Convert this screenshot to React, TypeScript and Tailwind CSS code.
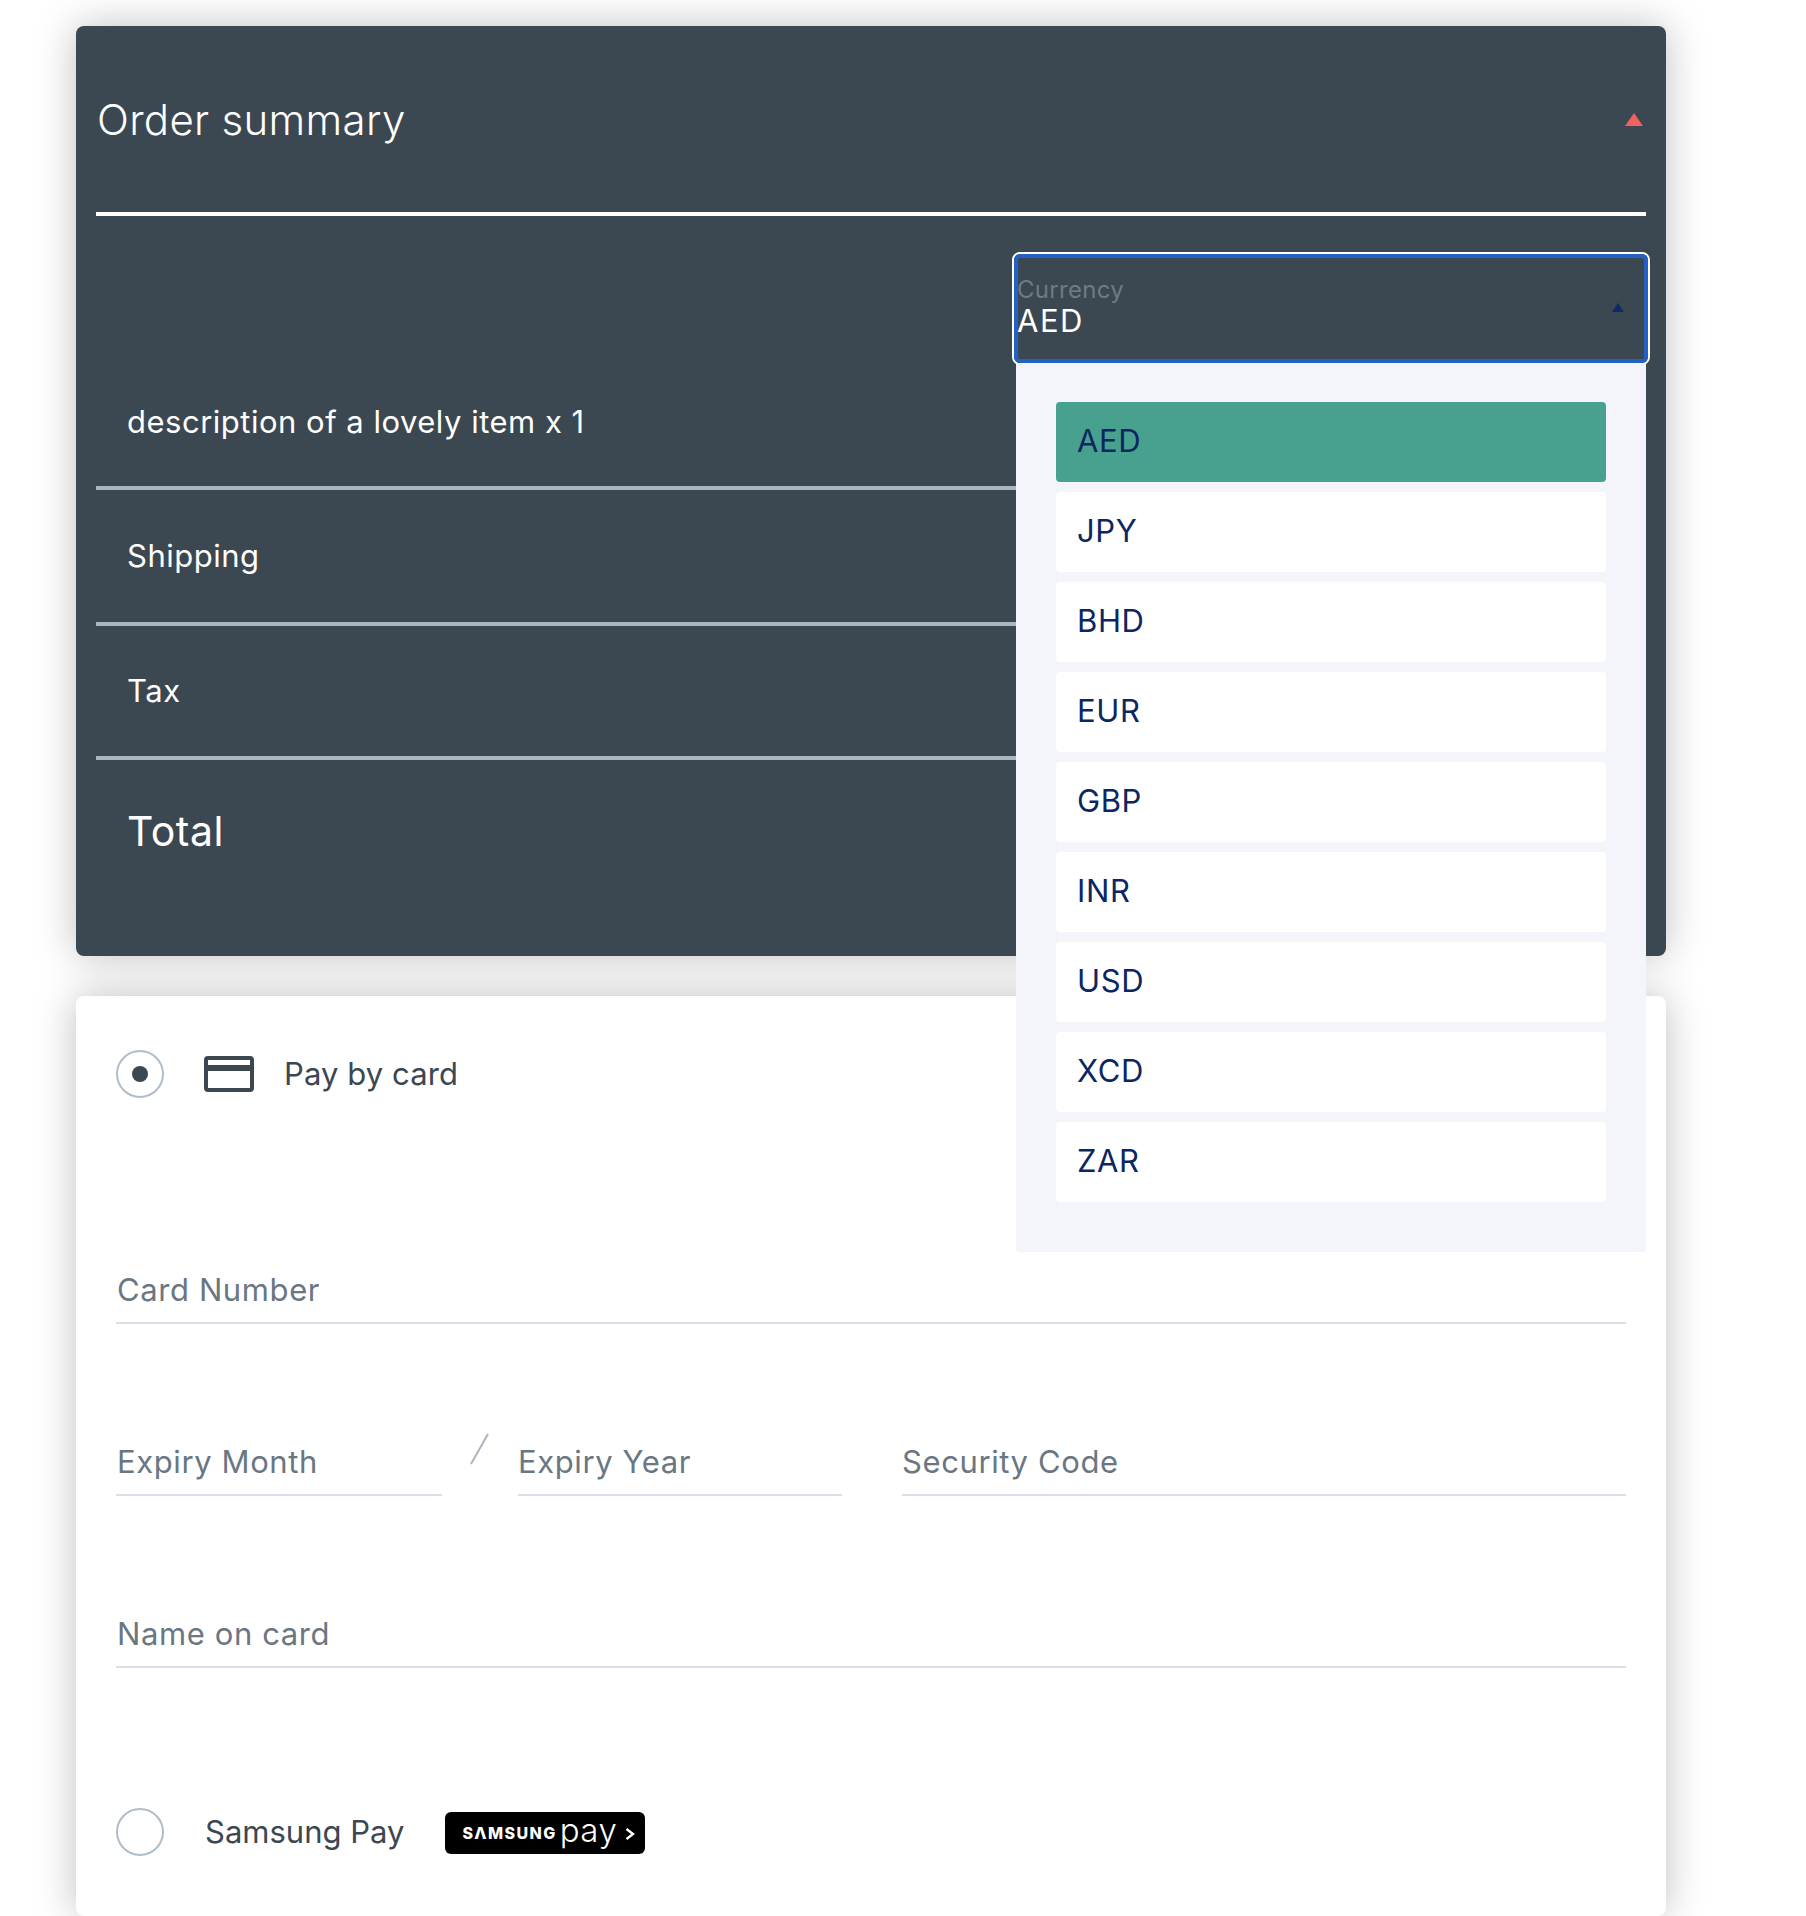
const CURRENCIES = ["AED", "JPY", "BHD", "EUR", "GBP", "INR", "USD", "XCD", "ZAR"];

const SummaryRow = ({ label, className }: { label: string; className: string }) => (
  <div className={`flex items-center pl-[31px] border-b-4 border-[#a9b5bf] text-[31px] tracking-[0.5px] ${className}`}>
    {label}
  </div>
);

const CardField = ({ label, className = "" }: { label: string; className?: string }) => (
  <div className={`h-[49px] border-b-2 border-[#d9dee8] text-[31px] leading-[30px] tracking-[0.6px] text-[#6a7782] ${className}`}>
    {label}
  </div>
);

const CurrencySelect = () => (
  <div className="relative ml-auto mr-[-2px] h-[109px] w-[634px]">
    <div className="flex h-full items-center justify-between rounded-[6px] border-4 border-[#2361c5] ring-2 ring-white">
      <div className="-ml-[1px] -mt-[3px]">
        <div className="text-[24px] leading-[28px] tracking-[0.3px] text-[#6f7a84]">Currency</div>
        <div className="text-[31px] leading-[34px] tracking-[1.5px] text-white">AED</div>
      </div>
      <div className="mr-[20px] -mt-[2px] h-0 w-0 border-x-[6px] border-b-[9px] border-x-transparent border-b-[#0b2a66]" />
    </div>
    <div className="absolute left-[2px] top-full z-10 flex h-[889px] w-[630px] flex-col gap-[10px] rounded-b-[4px] bg-[#f4f5fa] px-[40px] pt-[39px]">
      {CURRENCIES.map((code, i) => (
        <div
          key={code}
          className={`flex h-[80px] shrink-0 items-center rounded-[4px] pb-[1px] pl-[21px] text-[31px] tracking-[0.6px] text-[#0c2661] ${
            i === 0 ? "bg-[#48a08e]" : "bg-white"
          }`}
        >
          {code}
        </div>
      ))}
    </div>
  </div>
);

const OrderSummary = () => (
  <section className="relative z-10 h-[930px] rounded-[8px] bg-[#3b4751] px-[20px] text-white shadow-[0_0_40px_rgba(0,0,0,0.25)]">
    <header className="flex h-[190px] items-center justify-between border-b-4 border-white">
      <h1 className="pl-[1px] pt-[2px] text-[42px] font-[350] leading-none tracking-[0.3px]">Order summary</h1>
      <div className="mr-[3px] h-0 w-0 border-x-[9px] border-b-[13px] border-x-transparent border-b-[#f0625f]" />
    </header>
    <div className="pt-[38px]">
      <CurrencySelect />
    </div>
    <SummaryRow label="description of a lovely item x 1" className="h-[127px] pb-[4px]" />
    <SummaryRow label="Shipping" className="h-[136px]" />
    <SummaryRow label="Tax" className="h-[134px]" />
    <div className="flex h-[143px] items-center pl-[31px] text-[41px] tracking-[0.5px]">Total</div>
  </section>
);

const CardIcon = () => (
  <svg width="50" height="36" viewBox="0 0 50 36" fill="none">
    <rect x="2" y="2" width="46" height="32" rx="2" stroke="#3b4751" strokeWidth="4" />
    <rect x="2" y="9" width="46" height="6" fill="#3b4751" />
  </svg>
);

const Radio = ({ checked = false }: { checked?: boolean }) => (
  <div className="flex h-[48px] w-[48px] shrink-0 items-center justify-center rounded-full border-2 border-[#b0bdc9]">
    {checked && <div className="h-[16px] w-[16px] rounded-full bg-[#3b4751]" />}
  </div>
);

const SamsungBadge = () => (
  <div className="ml-[41px] mt-[2px] flex h-[42px] w-[200px] items-center rounded-[6px] bg-black pl-[17px] text-white">
    <span className="text-[16px] font-extrabold leading-none tracking-[1.4px]">SΛMSUNG</span>
    <span className="ml-[3px] pb-[5px] text-[33px] font-light leading-none tracking-[0.5px]">pay</span>
    <svg width="10" height="12" viewBox="0 0 10 12" fill="none" className="ml-[8px] mt-[2px]">
      <path d="M1.5 1 L8 6 L1.5 11" stroke="#ffffff" strokeWidth="2.4" />
    </svg>
  </div>
);

const PaymentForm = () => (
  <section className="mt-[40px] h-[920px] rounded-[8px] bg-white pl-[40px] pr-[40px] shadow-[0_0_40px_rgba(0,0,0,0.25)]">
    <div className="flex items-center pt-[54px]">
      <Radio checked />
      <div className="ml-[40px]">
        <CardIcon />
      </div>
      <span className="ml-[30px] text-[31px] tracking-[0.1px] text-[#3b4751]">Pay by card</span>
    </div>
    <CardField label="Card Number" className="mt-[177px] pl-[1px]" />
    <div className="mt-[123px] flex items-start">
      <CardField label="Expiry Month" className="w-[326px] pl-[1px]" />
      <svg width="76" height="32" viewBox="0 0 76 32" className="-mt-[14px] shrink-0">
        <line x1="29" y1="31" x2="46" y2="1" stroke="#a9b5bf" strokeWidth="2" />
      </svg>
      <CardField label="Expiry Year" className="w-[324px]" />
      <CardField label="Security Code" className="ml-[60px] flex-1" />
    </div>
    <CardField label="Name on card" className="mt-[123px] pl-[1px]" />
    <div className="mt-[140px] flex items-center">
      <Radio />
      <span className="ml-[41px] text-[31px] text-[#3b4751]">Samsung Pay</span>
      <SamsungBadge />
    </div>
  </section>
);

export default function App() {
  return (
    <div className="h-[1916px] overflow-hidden bg-white pt-[26px] font-['Inter',sans-serif]">
      <div className="ml-[76px] w-[1590px]">
        <OrderSummary />
        <PaymentForm />
      </div>
    </div>
  );
}
